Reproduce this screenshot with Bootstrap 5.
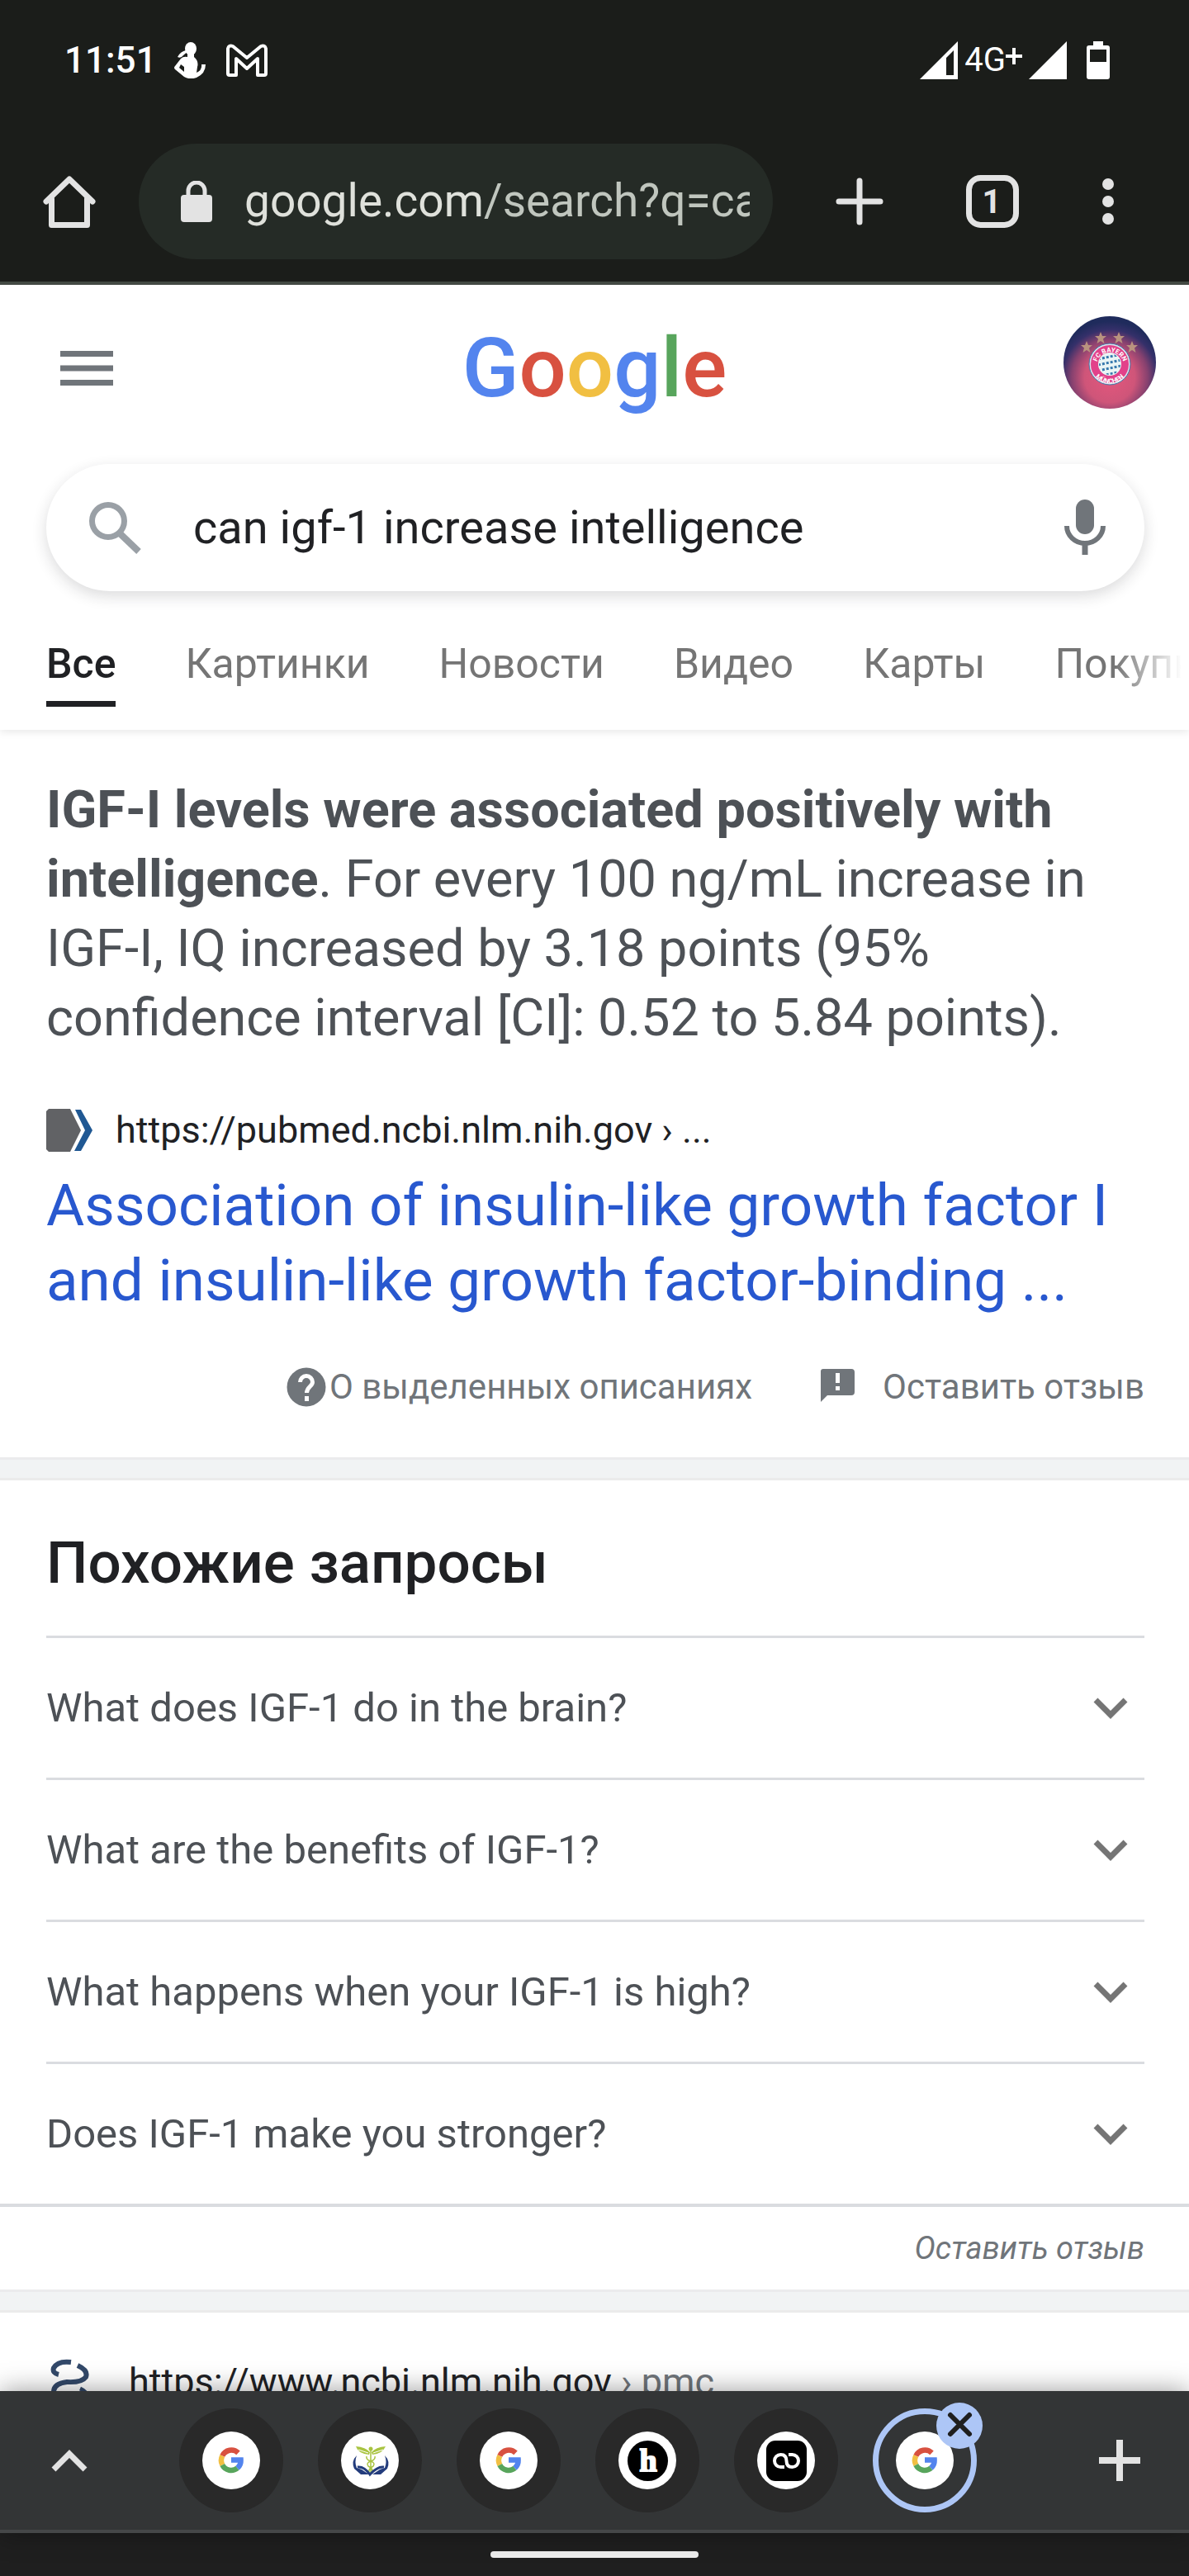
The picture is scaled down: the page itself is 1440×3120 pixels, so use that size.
<!DOCTYPE html>
<html lang="ru">
<head>
    <meta charset="UTF-8" />
    <meta name="viewport" content="width=device-width, initial-scale=1" />
    <title>can igf-1 increase intelligence - Google</title>
    <link href="https://cdn.jsdelivr.net/npm/bootstrap@5.3.0/dist/css/bootstrap.min.css" rel="stylesheet" />
    <style>
        body { font-family: Roboto, "Noto Sans", sans-serif; color: #4d5156; background: #fff; }
        svg { display: block; flex: none; }
        a { text-decoration: none; color: inherit; }
        button { border: 0; background: none; padding: 0; color: inherit; }

        /* status bar + browser toolbar */
        .top-chrome { background: #1b1d1a; color: #e3e3e3; border-bottom: 4px solid #434943; }
        .status { height: 146px; padding: 0 96px 0 78px; color: #fff; font-size: 44px; line-height: 56px; }
        .status-time { font-weight: 500; margin-right: 20px; }
        .status-net { font-size: 40px; }
        .toolbar { height: 195px; padding: 0 66px 0 52px; }
        .address { height: 140px; margin: 0 73px 0 52px; padding: 0 28px 0 50px; gap: 38px; border-radius: 70px; background: #252b26; color: #dfe1db; font-size: 55px; }
        .address-path { color: #c0c6be; }
        .btn-add { margin-right: 97px; }
        .btn-tabs { margin-right: 76px; }

        /* page */
        .page { overflow-y: auto; scrollbar-width: none; min-height: 0; }
        .page::-webkit-scrollbar { display: none; }
        .page-head { padding: 38px 40px 67px; }
        .logo { font-size: 101px; line-height: 98px; font-weight: 500; padding-top: 14px; }
        .c-blue { color: #5384ee; } .c-red { color: #d85140; } .c-yellow { color: #f1bf42; } .c-green { color: #58a55c; }
        .search-box { height: 154px; margin: 0 54px 0 56px; padding: 0 42px 0 48px; border-radius: 77px; box-shadow: 0 6px 18px rgba(32, 33, 36, .16); }
        .search-box input { border: 0; outline: 0; background: none; margin-left: 58px; padding: 0; font-size: 56px; color: #202124; }
        .tabs { height: 168px; padding: 60px 0 0 56px; gap: 84px; font-size: 50px; color: #757575; overflow: hidden; box-shadow: 0 2px 10px rgba(0, 0, 0, .1); }
        .tabs-wrap { overflow: hidden; padding-bottom: 12px; margin-bottom: -12px; position: relative; }
        .tabs-wrap::after { content: ""; position: absolute; top: 20px; right: 0; width: 90px; height: 120px; background: linear-gradient(90deg, rgba(255, 255, 255, 0), #fff 90%); }
        .tabs a { height: 80px; line-height: 56px; white-space: nowrap; }
        .tabs a.current { color: #202124; font-weight: 500; border-bottom: 7px solid #202124; }

        .block { padding-left: 56px; padding-right: 54px; }
        .snippet { padding-top: 55px; font-size: 63px; line-height: 84px; }
        .source { color: #202124; font-size: 45px; line-height: 56px; }
        .source-path { color: #70757a; }
        .source-pad { margin-top: 66px; gap: 28px; }
        .result-title { color: #2858cf; font-size: 71px; line-height: 91px; font-weight: 400; margin: 17px 0 60px; }
        .notes { color: #70757a; font-size: 42px; line-height: 48px; padding-bottom: 61px; gap: 82px; }
        .notes-flag { margin-right: 26px; }
        .band { height: 28px; background: #f1f3f4; border-top: 3px solid #ebebed; border-bottom: 3px solid #ebebeb; }
        .related-title { color: #202124; font-size: 71px; line-height: 80px; font-weight: 500; padding: 60px 0 48px; margin: 0; }
        .question { height: 172px; border-top: 3px solid #dadce0; padding-right: 20px; font-size: 49px; text-align: left; }
        .feedback { height: 104px; border-top: 4px solid #dadce0; color: #70757a; font-size: 38px; font-style: italic; }
        .next-result { padding-top: 56px; gap: 44px; }

        /* tab strip and system bar */
        .tab-strip { height: 172px; padding: 0 52px 0 52px; background: #333536; border-bottom: 4px solid #454748; box-shadow: 0 0 30px rgba(0, 0, 0, .4); position: relative; }
        .tab-icons { gap: 42px; margin-left: 101px; }
        .tab-chip { width: 126px; height: 126px; border-radius: 50%; background: #292929; }
        .tab-chip.active { background: none; border: 7px solid #adc6f6; position: relative; }
        .tab-close { position: absolute; top: -14px; right: -14px; width: 56px; height: 56px; }
        .system-bar { height: 52px; background: #1f1f1f; }
        .handle { width: 252px; height: 8px; border-radius: 4px; background: #ededed; }
    </style>
</head>
<body class="d-flex flex-column vh-100">

<!-- shared icons -->
<svg width="0" height="0" class="position-absolute" aria-hidden="true">
    <symbol id="g-mark" viewBox="0 0 70 70">
        <circle cx="35" cy="35" r="35" fill="#fff" />
        <g fill="none" stroke-width="6.5">
            <path d="M43.5 25.8A12 12 0 0 0 24.3 29.5" stroke="#d85140" />
            <path d="M24.3 29.5A12 12 0 0 0 24.3 40.5" stroke="#f1bf42" />
            <path d="M24.3 40.5A12 12 0 0 0 42.5 44.3" stroke="#58a55c" />
            <path d="M42.5 44.3A12 12 0 0 0 46.6 34.6H35" stroke="#5384ee" />
        </g>
    </symbol>
    <symbol id="chev" viewBox="0 0 42 28">
        <path d="M3 4L21 22L39 4" fill="none" stroke="#757575" stroke-width="7" />
    </symbol>
</svg>

<header class="top-chrome">
    <div class="status d-flex align-items-center">
        <span class="status-time">11:51</span>
        <svg width="40" height="44" viewBox="0 0 40 44" fill="#fff">
            <ellipse cx="21" cy="8" rx="7" ry="8" />
            <path d="M15 10Q9 11 5 18Q9 20 12 16Q14 14 17 12Z" />
            <path d="M17 12H25V18Q31 23 29 30L28 37Q35 34 34 27H39Q39 38 28 43Q20 46 13 42L2 33Q0 31 2 29L9 20Q12 17 17 18ZM9 27L7 31L13 36V30Z" fill-rule="evenodd" />
        </svg>
        <svg class="ms-4" width="50" height="40" viewBox="0 0 50 40" fill="none" stroke="#fff" stroke-width="4" stroke-linejoin="round">
            <path d="M2 36V6Q3 1 8 3L25 17L42 3Q47 1 48 6V36Q48 38 46 38H38V18L25 30L12 18V38H4Q2 38 2 36Z" />
        </svg>
        <div class="ms-auto d-flex align-items-center">
            <svg width="46" height="46" viewBox="0 0 46 46"><path d="M0 46L46 0V46ZM32 20V41H41V11Z" fill="#fff" fill-rule="evenodd" /></svg>
            <span class="status-net ms-2">4G</span>
            <svg width="20" height="30" viewBox="0 0 20 30"><path d="M0 10H20M10 0V20" stroke="#fff" stroke-width="4" /></svg>
            <svg class="ms-2" width="46" height="46" viewBox="0 0 46 46"><path d="M0 46L46 0V46Z" fill="#fff" /></svg>
            <svg class="ms-4" width="28" height="46" viewBox="0 0 28 46"><path d="M8 0H20V5H25Q28 5 28 8V43Q28 46 25 46H3Q0 46 0 43V8Q0 5 3 5H8ZM4 10V25H24V10Z" fill="#fff" fill-rule="evenodd" /></svg>
        </div>
    </div>
    <div class="toolbar d-flex align-items-center">
        <button type="button" aria-label="Home">
            <svg width="64" height="64" viewBox="0 0 64 64" fill="none" stroke="#e3e3e3" stroke-width="7" stroke-linecap="round" stroke-linejoin="round"><path d="M4 32L32 5L60 32" /><path d="M10.500 29V60.500H53.500V29" /></svg>
        </button>
        <button type="button" class="address d-flex align-items-center flex-grow-1 overflow-hidden text-start">
            <svg width="40" height="50" viewBox="0 0 40 50"><rect x="1" y="17" width="38" height="33" rx="4" fill="#e3e3e3" /><path d="M10 19V12A10 10 0 0 1 30 12V19" fill="none" stroke="#e3e3e3" stroke-width="5" /></svg>
            <span class="flex-grow-1 overflow-hidden text-nowrap">google.com<span class="address-path">/search?q=can</span></span>
        </button>
        <button type="button" class="btn-add" aria-label="New tab">
            <svg width="64" height="64" viewBox="0 0 64 64"><path d="M32 7V57M7 32H57" stroke="#e3e3e3" stroke-width="7" stroke-linecap="round" /></svg>
        </button>
        <button type="button" class="btn-tabs" aria-label="Tabs">
            <svg width="64" height="64" viewBox="0 0 64 64"><rect x="3.500" y="3.500" width="57" height="57" rx="14" fill="none" stroke="#e3e3e3" stroke-width="7" /><text x="31" y="46" text-anchor="middle" font-size="40" font-weight="700" fill="#e3e3e3">1</text></svg>
        </button>
        <button type="button" aria-label="Menu">
            <svg width="64" height="64" viewBox="0 0 64 64" fill="#e3e3e3"><circle cx="32" cy="11" r="7" /><circle cx="32" cy="32" r="7" /><circle cx="32" cy="53" r="7" /></svg>
        </button>
    </div>
</header>

<main class="page flex-grow-1">
    <div class="page-head d-flex align-items-center justify-content-between">
        <button type="button" aria-label="Menu">
            <svg width="112" height="64" viewBox="0 0 112 64" fill="#70757a"><path d="M33 18H97V25H33ZM33 35.500H97V42.500H33ZM33 53H97V60H33Z" /></svg>
        </button>
        <a href="#" class="logo"><span class="c-blue">G</span><span class="c-red">o</span><span class="c-yellow">o</span><span class="c-blue">g</span><span class="c-green">l</span><span class="c-red">e</span></a>
        <a href="#" aria-label="Account">
            <svg width="112" height="112" viewBox="0 0 112 112">
                <defs>
                    <radialGradient id="sky" cx="56" cy="74" r="68" gradientUnits="userSpaceOnUse">
                        <stop offset="0" stop-color="#e4577d" /><stop offset=".45" stop-color="#cf5579" /><stop offset=".68" stop-color="#86416f" /><stop offset=".85" stop-color="#35306a" /><stop offset="1" stop-color="#1f2b5c" />
                    </radialGradient>
                    <path id="arc-top" d="M40 60A16.500 16.500 0 0 1 73 60" />
                    <path id="arc-low" d="M33.500 59A22.500 22.500 0 0 0 78.500 59" />
                    <path id="star" d="M0-7L2-2H7L3 1.500L4.500 7L0 4L-4.500 7L-3 1.500L-7-2H-2Z" />
                    <clipPath id="core"><circle cx="56" cy="58" r="13" /></clipPath>
                </defs>
                <circle cx="56" cy="56" r="56" fill="url(#sky)" />
                <g fill="#b9937f"><use href="#star" x="28" y="37" /><use href="#star" x="45" y="26" /><use href="#star" x="67" y="26" /><use href="#star" x="83" y="37" /></g>
                <circle cx="56" cy="58" r="24" fill="#e2418a" stroke="#dce3ec" stroke-width="2" />
                <circle cx="56" cy="58" r="25" fill="none" stroke="#4572a5" stroke-width="1" />
                <g font-size="8" font-weight="700" fill="#fff" text-anchor="middle">
                    <text><textPath href="#arc-top" startOffset="50%">FC BAYERN</textPath></text>
                    <text><textPath href="#arc-low" startOffset="50%">MÜNCHEN</textPath></text>
                </g>
                <circle cx="56" cy="58" r="14" fill="#eaf5f5" />
                <g clip-path="url(#core)" stroke="#3779ad" stroke-width="3" stroke-dasharray="3 2">
                    <path d="M42 52L70 46M42 59L70 53M42 66L70 60M42 73L70 67" />
                </g>
            </svg>
        </a>
    </div>

    <form class="search-box d-flex align-items-center" onsubmit="return false">
        <svg width="72" height="64" viewBox="0 0 72 64" fill="none" stroke="#9aa0a6" stroke-width="7"><circle cx="27" cy="24" r="19.500" /><path d="M40 38L64 61" stroke-width="8" /></svg>
        <input type="text" class="flex-grow-1" aria-label="Поиск" value="can igf-1 increase intelligence" />
        <button type="button" aria-label="Голосовой поиск">
            <svg width="60" height="68" viewBox="2 0 60 68"><rect x="21" y="0" width="22" height="42" rx="11" fill="#70757a" /><path d="M10 32A22 21 0 0 0 54 32" fill="none" stroke="#70757a" stroke-width="6" /><path d="M32 52V67" stroke="#70757a" stroke-width="7" /></svg>
        </button>
    </form>

    <div class="tabs-wrap">
        <nav class="tabs d-flex">
            <a href="#" class="current">Все</a>
            <a href="#">Картинки</a>
            <a href="#">Новости</a>
            <a href="#">Видео</a>
            <a href="#">Карты</a>
            <a href="#">Покупки</a>
        </nav>
    </div>

    <section class="block">
        <div class="snippet"><b>IGF-I levels were associated positively with intelligence</b>. For every 100 ng/mL increase in IGF-I, IQ increased by 3.18 points (95% confidence interval [CI]: 0.52 to 5.84 points).</div>
        <div class="source source-pad d-flex align-items-center">
            <svg width="56" height="52" viewBox="0 0 56 52"><path d="M0 3L3 0H29L42 26L29 52H3L0 49Z" fill="#616265" /><path d="M35 1H42L56 26L42 51H34L47 26Z" fill="#205893" /></svg>
            <span>https://pubmed.ncbi.nlm.nih.gov › ...</span>
        </div>
        <h3 class="result-title"><a href="#">Association of insulin-like growth factor I and insulin-like growth factor-binding ...</a></h3>
        <div class="notes d-flex justify-content-end">
            <a href="#" class="d-flex align-items-center">
                <svg width="52" height="48" viewBox="0 0 52 48"><circle cx="24" cy="24" r="23.500" fill="#70757a" /><path d="M16.500 18A7.500 7.500 0 0 1 31.500 18C31.500 23 24.500 24 24.500 31" fill="none" stroke="#fff" stroke-width="5" /><path d="M22 35H27V41H22Z" fill="#fff" /></svg>
                <span>О выделенных описаниях</span>
            </a>
            <a href="#" class="d-flex align-items-center">
                <svg class="notes-flag" width="50" height="48" viewBox="0 0 50 48"><path d="M4 2H38Q42 2 42 6V30Q42 34 38 34H9L1 42V5Q1 2 4 2ZM19 7V19H24V7ZM19 23V28H24V23Z" fill="#70757a" fill-rule="evenodd" /></svg>
                <span>Оставить отзыв</span>
            </a>
        </div>
    </section>
    <div class="band"></div>

    <section>
        <div class="block">
            <h2 class="related-title">Похожие запросы</h2>
            <button type="button" class="question w-100 d-flex align-items-center justify-content-between"><span>What does IGF-1 do in the brain?</span><svg width="42" height="28"><use href="#chev" /></svg></button>
            <button type="button" class="question w-100 d-flex align-items-center justify-content-between"><span>What are the benefits of IGF-1?</span><svg width="42" height="28"><use href="#chev" /></svg></button>
            <button type="button" class="question w-100 d-flex align-items-center justify-content-between"><span>What happens when your IGF-1 is high?</span><svg width="42" height="28"><use href="#chev" /></svg></button>
            <button type="button" class="question w-100 d-flex align-items-center justify-content-between"><span>Does IGF-1 make you stronger?</span><svg width="42" height="28"><use href="#chev" /></svg></button>
        </div>
        <div class="feedback block d-flex align-items-center justify-content-end"><a href="#">Оставить отзыв</a></div>
    </section>
    <div class="band"></div>

    <section class="block next-result source d-flex align-items-center">
        <svg width="56" height="56" viewBox="0 0 56 56" fill="none" stroke="#33496a">
            <path d="M30 4Q14 2 9 11Q7 17 15 19" stroke-width="6" /><path d="M38 8Q51 14 48 22Q43 29 25 28Q9 30 9 40Q12 50 28 50" stroke-width="6" /><path d="M41 36Q50 40 50 48" stroke-width="5" />
        </svg>
        <a href="#">https://www.ncbi.nlm.nih.gov <span class="source-path">› pmc</span></a>
    </section>
</main>

<footer>
    <div class="tab-strip d-flex align-items-center">
        <button type="button" aria-label="Expand">
            <svg width="64" height="64" viewBox="0 0 64 64"><path d="M13 43L32 24L51 43" fill="none" stroke="#e3e3e3" stroke-width="7" /></svg>
        </button>
        <div class="tab-icons d-flex">
            <button type="button" class="tab-chip d-flex align-items-center justify-content-center" aria-label="Google"><svg width="70" height="70"><use href="#g-mark" /></svg></button>
            <button type="button" class="tab-chip d-flex align-items-center justify-content-center" aria-label="Health">
                <svg width="70" height="70" viewBox="0 0 70 70">
                    <circle cx="35" cy="35" r="35" fill="#fff" />
                    <g fill="#a9c441"><path d="M35 25Q30 19 18 18Q21 27 34 28ZM37 25Q42 19 54 18Q50 27 38 28Z" /><circle cx="36" cy="21" r="2.500" /></g>
                    <path d="M21 22L33 26M51 22L39 26" stroke="#fff" stroke-width="1" />
                    <path d="M36 20V51M31 30Q30 34 36 36Q42 38 39 42Q33 45 34 49M41 30Q42 34 36 36Q30 38 33 42Q39 45 38 49" fill="none" stroke="#a9c441" stroke-width="1.500" />
                    <path d="M19 29Q16 37 19 44L25 46L34 52H24L16 45Q12 36 19 29ZM53 29Q56 37 53 44L47 46L38 52H48L56 45Q60 36 53 29Z" fill="#233c7c" />
                    <path d="M20 43Q28 42 35 52Q44 42 52 43" fill="none" stroke="#233c7c" stroke-width="3" />
                </svg>
            </button>
            <button type="button" class="tab-chip d-flex align-items-center justify-content-center" aria-label="Google"><svg width="70" height="70"><use href="#g-mark" /></svg></button>
            <button type="button" class="tab-chip d-flex align-items-center justify-content-center" aria-label="h">
                <svg width="70" height="70" viewBox="0 0 70 70"><circle cx="35" cy="35" r="35" fill="#fff" /><circle cx="35.500" cy="35.500" r="24.500" /><text x="36" y="48" text-anchor="middle" font-family="Liberation Serif, serif" font-size="38" font-weight="700" fill="#fff" stroke="#fff" stroke-width="2">h</text></svg>
            </button>
            <button type="button" class="tab-chip d-flex align-items-center justify-content-center" aria-label="Infinity">
                <svg width="70" height="70" viewBox="0 0 70 70"><circle cx="35" cy="35" r="35" fill="#fff" /><rect x="11" y="11" width="49" height="49" rx="11" /><path d="M33 43H28.500A7.500 7.500 0 0 1 28.500 28Q35.500 28 35.500 35.500Q35.500 43 42.500 43A7.500 7.500 0 0 0 42.500 28H38" fill="none" stroke="#fff" stroke-width="4" /></svg>
            </button>
            <div class="tab-chip active d-flex align-items-center justify-content-center">
                <svg width="70" height="70"><use href="#g-mark" /></svg>
                <button type="button" class="tab-close" aria-label="Close"><svg width="56" height="56" viewBox="0 0 56 56"><circle cx="28" cy="28" r="28" fill="#adc6f6" /><path d="M17 15L40 38M40 15L17 38" stroke="#1f1f1f" stroke-width="6" stroke-linecap="round" /></svg></button>
            </div>
        </div>
        <button type="button" class="ms-auto" aria-label="New tab">
            <svg width="64" height="64" viewBox="0 0 64 64"><path d="M32 7V57M7 32H57" stroke="#e3e3e3" stroke-width="8" /></svg>
        </button>
    </div>
    <div class="system-bar d-flex align-items-center justify-content-center"><div class="handle"></div></div>
</footer>

<script src="https://cdn.jsdelivr.net/npm/bootstrap@5.3.0/dist/js/bootstrap.bundle.min.js"></script>
</body>
</html>
